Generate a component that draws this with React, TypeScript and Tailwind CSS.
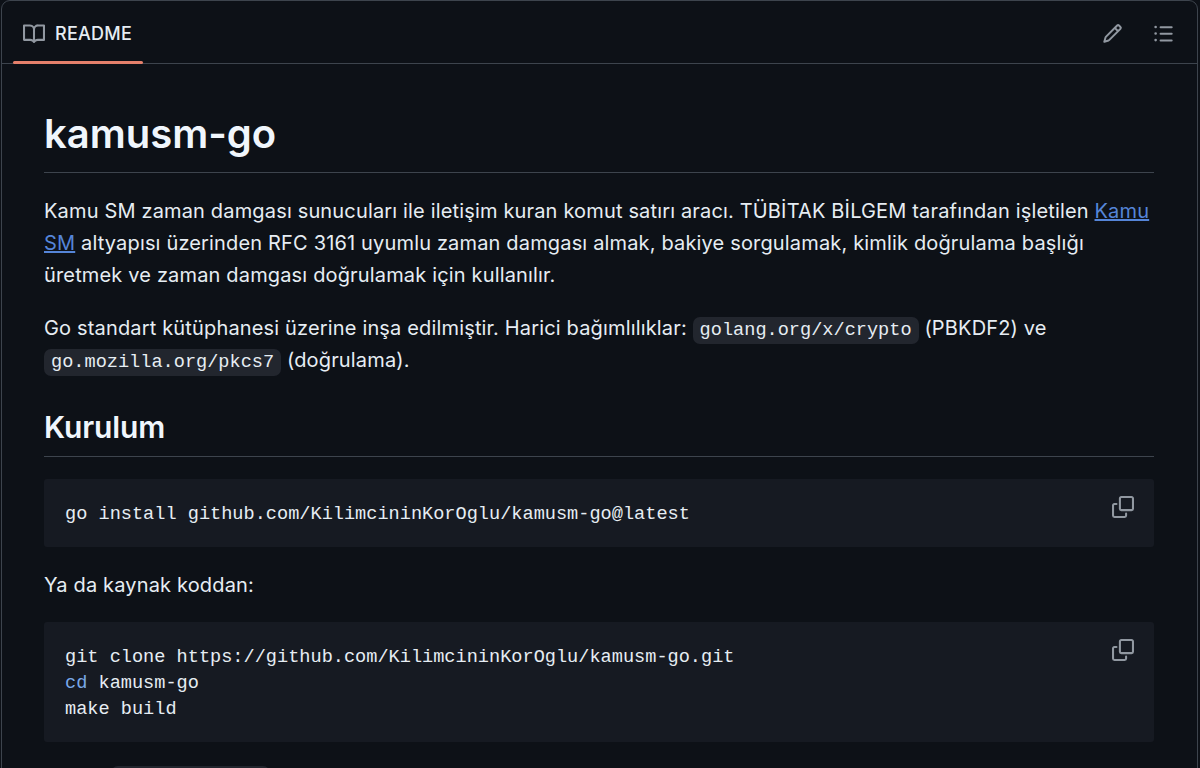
export default function App() {
  const sans = "font-['Inter','Liberation_Sans',sans-serif]";
  const mono = "font-['Liberation_Mono',monospace]";
  const chip = `${mono} text-[18.6px] leading-none tracking-normal text-[#e6edf3] bg-[#22262e] rounded-[7px] px-[7px] py-[3px]`;
  const block = `relative bg-[#161a22] rounded-[3px] px-[21px] pt-[23px] pb-[19px] ${mono} text-[18.6px] leading-[26px] tracking-normal text-[#e6edf3]`;
  const copy = (
    <svg viewBox="0 0 16 16" className="w-[22px] h-[22px] text-[#9198a1] absolute right-[20px] top-[17px]" fill="currentColor">
      <path d="M0 6.75C0 5.784.784 5 1.75 5h1.5a.75.75 0 0 1 0 1.5h-1.5a.25.25 0 0 0-.25.25v7.5c0 .138.112.25.25.25h7.5a.25.25 0 0 0 .25-.25v-1.5a.75.75 0 0 1 1.5 0v1.5A1.75 1.75 0 0 1 9.25 16h-7.5A1.75 1.75 0 0 1 0 14.25Z" />
      <path d="M5 1.75C5 .784 5.784 0 6.75 0h7.5C15.216 0 16 .784 16 1.75v7.5A1.75 1.75 0 0 1 14.25 11h-7.5A1.75 1.75 0 0 1 5 9.25Zm1.75-.25a.25.25 0 0 0-.25.25v7.5c0 .138.112.25.25.25h7.5a.25.25 0 0 0 .25-.25v-7.5a.25.25 0 0 0-.25-.25Z" />
    </svg>
  );
  return (
    <div className={`h-[768px] w-[1200px] overflow-hidden bg-[#0d1117] text-[#e6edf3] ${sans}`}>
      <div className="h-[800px] ml-px mr-[2px] border border-[#3d444d] rounded-t-[9px]">
        <div className="h-[63px] border-b border-[#3d444d] flex items-center justify-between pl-[11px] pr-[23px]">
          <div className="relative h-[62px] w-[130px] flex items-center gap-[10px] pl-[10px] pt-[3px]">
            <svg viewBox="0 0 16 16" className="w-[22px] h-[22px] text-[#9198a1]" fill="currentColor">
              <path d="M0 1.75A.75.75 0 0 1 .75 1h4.253c1.227 0 2.317.59 3 1.501A3.743 3.743 0 0 1 11.006 1h4.245a.75.75 0 0 1 .75.75v10.5a.75.75 0 0 1-.75.75h-4.507a2.25 2.25 0 0 0-1.591.659l-.622.621a.75.75 0 0 1-1.06 0l-.622-.621A2.25 2.25 0 0 0 5.258 13H.75a.75.75 0 0 1-.75-.75Zm7.251 10.324.004-5.073-.002-2.253A2.25 2.25 0 0 0 5.003 2.5H1.5v9h3.757a3.75 3.75 0 0 1 1.994.574ZM8.755 4.75l-.004 7.322a3.752 3.752 0 0 1 1.992-.572H14.5v-9h-3.495a2.25 2.25 0 0 0-2.25 2.25Z" />
            </svg>
            <span className="text-[18px] font-medium tracking-[0.25px]">README</span>
            <div className="absolute left-0 right-0 bottom-[-1px] h-[3px] bg-[#e5806b] rounded-sm" />
          </div>
          <div className="flex items-center gap-[30px] pt-[3px]">
            <svg viewBox="0 0 16 16" className="w-[21px] h-[21px] text-[#9198a1]" fill="currentColor">
              <path d="M11.013 1.427a1.75 1.75 0 0 1 2.474 0l1.086 1.086a1.75 1.75 0 0 1 0 2.474l-8.61 8.61c-.21.21-.47.364-.756.445l-3.251.93a.75.75 0 0 1-.927-.928l.929-3.25c.081-.286.235-.547.445-.758l8.61-8.61Zm.176 4.823L9.75 4.81l-6.286 6.287a.253.253 0 0 0-.064.108l-.558 1.953 1.953-.558a.253.253 0 0 0 .108-.064Zm1.238-3.763a.25.25 0 0 0-.354 0L10.811 3.75l1.439 1.44 1.263-1.263a.25.25 0 0 0 0-.354Z" />
            </svg>
            <svg viewBox="0 0 16 16" className="w-[21px] h-[21px] text-[#9198a1]" fill="currentColor">
              <path d="M5.75 2.5h8.5a.75.75 0 0 1 0 1.5h-8.5a.75.75 0 0 1 0-1.5Zm0 5h8.5a.75.75 0 0 1 0 1.5h-8.5a.75.75 0 0 1 0-1.5Zm0 5h8.5a.75.75 0 0 1 0 1.5h-8.5a.75.75 0 0 1 0-1.5ZM2 14a1 1 0 1 1 0-2 1 1 0 0 1 0 2Zm1-6a1 1 0 1 1-2 0 1 1 0 0 1 2 0ZM2 4a1 1 0 1 1 0-2 1 1 0 0 1 0 2Z" />
            </svg>
          </div>
        </div>
        <div className="pl-[42px] pr-[43px] pt-[39px] text-[20px] leading-[32px] tracking-[0.16px]">
          <h1 className="text-[40px] leading-[62px] font-semibold border-b border-[#3d444d] pb-[7px] tracking-normal text-[#f0f6fc]">kamusm-go</h1>
          <p className="mt-[22px]">
            Kamu SM zaman damgası sunucuları ile iletişim kuran komut satırı aracı. TÜBİTAK BİLGEM tarafından işletilen <a className="text-[#5585d8] underline">Kamu SM</a> altyapısı üzerinden RFC 3161 uyumlu zaman damgası almak, bakiye sorgulamak, kimlik doğrulama başlığı üretmek ve zaman damgası doğrulamak için kullanılır.
          </p>
          <p className="mt-[21px]">
            Go standart kütüphanesi üzerine inşa edilmiştir. Harici bağımlılıklar: <code className={chip}>golang.org/x/crypto</code> (PBKDF2) ve <code className={chip}>go.mozilla.org/pkcs7</code> (doğrulama).
          </p>
          <h2 className="mt-[28px] text-[30px] leading-[46px] font-semibold border-b border-[#3d444d] pb-[6px] tracking-[-0.1px] text-[#f0f6fc]">Kurulum</h2>
          <pre className={`${block} mt-[22px]`}>
            go install github.com/KilimcininKorOglu/kamusm-go@latest
            {copy}
          </pre>
          <p className="mt-[22px]">Ya da kaynak koddan:</p>
          <pre className={`${block} mt-[21px]`}>
            git clone https://github.com/KilimcininKorOglu/kamusm-go.git{"\n"}
            <span className="text-[#79a8e8]">cd</span> kamusm-go{"\n"}make build
            {copy}
          </pre>
          <p className="mt-[20px]">
            Binary <code className={`${mono} text-[18.6px] leading-none tracking-normal text-[#e6edf3] bg-[#22262e] rounded-[7px] px-[7px] py-[4px]`}>bin/kamusm-go</code>
          </p>
        </div>
      </div>
    </div>
  );
}
